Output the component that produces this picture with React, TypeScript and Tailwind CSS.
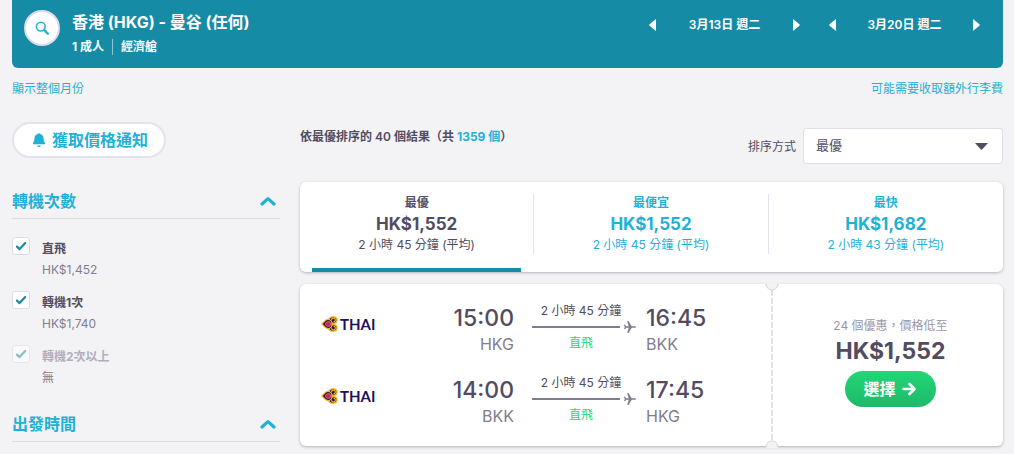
import { useState } from "react";
import { clsx } from "clsx";

const sortTabs = [
  { id: "best", label: "最優", price: "HK$1,552", duration: "2 小時 45 分鐘 (平均)" },
  { id: "cheapest", label: "最便宜", price: "HK$1,552", duration: "2 小時 45 分鐘 (平均)" },
  { id: "fastest", label: "最快", price: "HK$1,682", duration: "2 小時 43 分鐘 (平均)" },
];

const stopOptions = [
  { id: "direct", label: "直飛", price: "HK$1,452", disabled: false },
  { id: "one-stop", label: "轉機1次", price: "HK$1,740", disabled: false },
  { id: "two-stops", label: "轉機2次以上", price: "無", disabled: true },
];

const legs = [
  { depart: "15:00", from: "HKG", arrive: "16:45", to: "BKK", duration: "2 小時 45 分鐘" },
  { depart: "14:00", from: "BKK", arrive: "17:45", to: "HKG", duration: "2 小時 45 分鐘" },
];

function DateStepper({ date }: { date: string }) {
  return (
    <div className="flex w-[151px] items-center justify-between">
      <button type="button" aria-label="前一天">
        <svg width="7" height="12" viewBox="0 0 7 12" fill="currentColor">
          <path d="M7 0v12L.6 6.7a1 1 0 0 1 0-1.4z" />
        </svg>
      </button>
      <span className="text-xs font-semibold">{date}</span>
      <button type="button" aria-label="後一天">
        <svg width="7" height="12" viewBox="0 0 7 12" fill="currentColor">
          <path d="M0 0v12l6.4-5.3a1 1 0 0 0 0-1.4z" />
        </svg>
      </button>
    </div>
  );
}

function SearchHeader() {
  return (
    <header className="flex h-[68px] items-start justify-between rounded-b-md bg-[#158ba6] pr-[23px] pl-3 text-white">
      <div className="flex gap-3 pt-2.5">
        <button
          type="button"
          aria-label="搜尋"
          className="flex size-9 items-center justify-center rounded-full border-2 border-[#dddce6] bg-white text-[#1fb1d6]"
        >
          <svg width="16" height="16" viewBox="0 0 16 16" fill="none" stroke="currentColor">
            <circle cx="6.8" cy="6.6" r="4.4" strokeWidth="1.6" />
            <path d="M10.2 10l3.600 3.600" strokeWidth="2.400" strokeLinecap="round" />
          </svg>
        </button>
        <div>
          <h1 className="text-base leading-6 font-bold">香港 (HKG) - 曼谷 (任何)</h1>
          <p className="mt-1 flex items-center text-xs leading-[18px] font-bold">
            <span className="border-r border-white/50 pr-2 leading-4">1 成人</span>
            <span className="pl-2">經濟艙</span>
          </p>
        </div>
      </div>
      <div className="flex gap-[29px] pt-[17px]">
        <DateStepper date="3月13日 週二" />
        <DateStepper date="3月20日 週二" />
      </div>
    </header>
  );
}

function SectionHeading({ title }: { title: string }) {
  return (
    <h2 className="border-b border-[#dddce2]">
      <button type="button" className="flex h-9 w-full items-center justify-between pt-px pr-1 font-bold text-[#1fb1d6]">
        {title}
        <svg width="16" height="10" viewBox="0 0 16 10" fill="none" stroke="currentColor" strokeWidth="3.200">
          <path d="M2 8L8 2.600 14 8" strokeLinecap="round" strokeLinejoin="round" />
        </svg>
      </button>
    </h2>
  );
}

function StopFilter({ option }: { option: (typeof stopOptions)[number] }) {
  const [checked, setChecked] = useState(true);

  return (
    <label htmlFor={option.id} className="flex gap-3">
      <span className={clsx("relative size-[18px] shrink-0", option.disabled && "opacity-50")}>
        <input
          id={option.id}
          type="checkbox"
          checked={checked}
          disabled={option.disabled}
          onChange={() => setChecked(!checked)}
          className="block size-[18px] appearance-none rounded-[3px] border border-[#dddce6] bg-white"
        />
        {checked && (
          <svg
            className="pointer-events-none absolute inset-0"
            width="18"
            height="18"
            viewBox="0 0 18 18"
            fill="none"
            stroke="#158ba6"
            strokeWidth="2.200"
          >
            <path d="M5 9.600l2.600 2.500 5.600-6" strokeLinecap="round" strokeLinejoin="round" />
          </svg>
        )}
      </span>
      <span className="pt-px pb-px text-xs leading-[21px]">
        <span className={clsx("block font-bold", option.disabled && "text-[#b2aebd]")}>{option.label}</span>
        <span className="block text-[#817d90]">{option.price}</span>
      </span>
    </label>
  );
}

function Sidebar() {
  return (
    <aside className="w-[268px] shrink-0">
      <button
        type="button"
        className="flex h-9 items-center gap-1.5 rounded-full border-2 border-[#e4e2ec] bg-white pr-4 pl-[18px] font-bold text-[#1fb1d6]"
      >
        <svg width="14" height="16" viewBox="0 0 14 16" fill="currentColor">
          <path d="M7 1.200c.6 0 1 .4 1.100.9C10.300 2.600 11.500 4.300 11.600 6.600c.1 2.300.5 3.500 1.500 4.300V12.300H.9v-1.400c1-.8 1.400-2 1.500-4.300.1-2.300 1.300-4 3.500-4.500.1-.5.5-.9 1.100-.9z" />
          <path d="M5.200 13.500h3.600a1.800 1.500 0 0 1-3.600 0z" />
        </svg>
        獲取價格通知
      </button>
      <section className="mt-6">
        <SectionHeading title="轉機次數" />
        <div className="mt-[18px] flex flex-col gap-2.5">
          {stopOptions.map((option) => (
            <StopFilter key={option.id} option={option} />
          ))}
        </div>
      </section>
      <section className="mt-4">
        <SectionHeading title="出發時間" />
      </section>
    </aside>
  );
}

function ResultsBar() {
  return (
    <div className="flex items-start justify-between pt-1.5">
      <p className="text-xs leading-[18px] font-semibold">
        依最優排序的 40 個結果（共 <span className="font-bold text-[#1fb1d6]">1359 個</span>）
      </p>
      <div className="flex items-center gap-[7px]">
        <label htmlFor="sort" className="pt-0.5 text-xs">
          排序方式
        </label>
        <div className="relative">
          <select
            id="sort"
            className="h-9 w-[200px] appearance-none rounded-[3px] border border-[#e0dee8] bg-white px-3 text-[13px]"
          >
            <option>最優</option>
            <option>最便宜</option>
            <option>最快</option>
          </select>
          <svg
            className="pointer-events-none absolute top-[15px] right-[15px]"
            width="13"
            height="7"
            viewBox="0 0 13 7"
            fill="currentColor"
          >
            <path d="M0 0h13L7.300 6.300a1.100 1.100 0 0 1-1.600 0z" />
          </svg>
        </div>
      </div>
    </div>
  );
}

function SortTabs() {
  const [active, setActive] = useState("best");

  return (
    <div className="mt-[18px] grid grid-cols-3 rounded-md bg-white pt-3 pb-[18px] shadow-[0_1px_3px_rgba(37,32,51,0.3)]">
      {sortTabs.map((tab) => (
        <button
          key={tab.id}
          type="button"
          onClick={() => setActive(tab.id)}
          className={clsx(
            "relative border-r border-[#e4e2ea] text-center text-xs last:border-r-0",
            active !== tab.id && "text-[#1fb1d6]",
          )}
        >
          <span className="block leading-[18px] font-semibold">{tab.label}</span>
          <span className="block text-[17px] leading-6 font-bold">{tab.price}</span>
          <span className="block leading-[18px]">{tab.duration}</span>
          {active === tab.id && <span className="absolute inset-x-3 -bottom-[18px] h-1 bg-[#158ba6]" />}
        </button>
      ))}
    </div>
  );
}

function AirlineLogo() {
  return (
    <div className="flex flex-1 items-center gap-0.5 font-['Lato',sans-serif] text-[15px] leading-4 font-bold text-[#22105a]">
      <svg width="17" height="16" viewBox="0 0 17 16">
        <g fill="#22105a" stroke="#f5b81c" strokeWidth="1.300">
          <path d="M7.500 4.200C8 1.800 10 .7 12.300.8c2.300.1 3.700 1.500 3.700 3.400 0 2-1.500 3.200-3.400 3.100L9.500 7z" />
          <path d="M7.500 11.800c.5 2.400 2.500 3.500 4.800 3.400 2.300-.1 3.700-1.500 3.700-3.400 0-2-1.500-3.200-3.400-3.100L9.500 9z" />
          <path d="M.8 8C2.800 6.800 3.700 3.400 7 3.400c2.500 0 4.100 2.200 4.100 4.600S9.500 12.600 7 12.600C3.700 12.600 2.800 9.200.8 8z" />
        </g>
        <path d="M10.600 4.400a1.900 1.900 0 1 1 2 1.500M10.600 11.600a1.900 1.900 0 1 0 2-1.500" fill="none" stroke="#f5b81c" strokeWidth="1.100" />
        <path d="M4.200 8C5.200 6.400 6 5.600 7.400 5.600A2.400 2.400 0 0 1 7.400 10.400C6 10.400 5.200 9.600 4.200 8z" fill="#d3147f" stroke="#f5b81c" strokeWidth=".6" />
      </svg>
      THAI
    </div>
  );
}

function FlightLeg({ leg }: { leg: (typeof legs)[number] }) {
  return (
    <div className="flex h-[52px] items-start">
      <div className="flex h-10 flex-1 items-center">
        <AirlineLogo />
      </div>
      <div className="text-right">
        <p className="text-[23px] leading-7 font-medium">{leg.depart}</p>
        <p className="text-base leading-6 text-[#817d90]">{leg.from}</p>
      </div>
      <div className="ml-[18px] w-[104px] text-center text-xs leading-[14px]">
        <p className="pr-1.5">{leg.duration}</p>
        <div className="my-[3px] flex h-3 items-center gap-1 text-[#817d90]">
          <span className="h-0.5 flex-1 bg-[#817d90]" />
          <svg width="12" height="12" viewBox="0 0 12 12" fill="currentColor">
            <path d="M12 6c0 .5-.5.800-1.200.800H7.700L4.600 12H3.200l1.500-5.200H2.200L1.100 8.200H0L.7 6 0 3.800h1.100l1.100 1.400h2.500L3.200 0h1.400l3.100 5.200h3.100c.7 0 1.200.3 1.200.8z" />
          </svg>
        </div>
        <p className="pr-1.5 text-[#1fd572]">直飛</p>
      </div>
      <div className="ml-2.5 w-[105px]">
        <p className="text-[23px] leading-7 font-medium">{leg.arrive}</p>
        <p className="text-base leading-6 text-[#817d90]">{leg.to}</p>
      </div>
    </div>
  );
}

function Notch({ className }: { className: string }) {
  return (
    <svg className={clsx("absolute -left-[7px]", className)} width="14" height="8" viewBox="0 0 14 8">
      <path d="M1 0h12v1a6 6 0 0 1-12 0z" fill="#f3f2f5" />
      <path d="M1 1a6 6 0 0 0 12 0" fill="none" stroke="#d5d4da" />
    </svg>
  );
}

function Ticket() {
  return (
    <article className="mt-3 flex rounded-md bg-white shadow-[0_1px_3px_rgba(37,32,51,0.3)]">
      <div className="flex flex-1 flex-col gap-5 pt-5 pr-[21px] pb-[18px] pl-[21px]">
        {legs.map((leg) => (
          <FlightLeg key={leg.depart} leg={leg} />
        ))}
      </div>
      <div className="relative flex w-[231px] flex-col items-center pt-[33px] pl-1.5">
        <span className="absolute inset-y-1.5 -left-px w-0.5 bg-[repeating-linear-gradient(to_bottom,#e1dfe8_0_6px,transparent_6px_8px)]" />
        <Notch className="-top-px" />
        <Notch className="-bottom-0.5 rotate-180" />
        <p className="text-xs leading-[18px] text-[#9b97a8]">24 個優惠，價格低至</p>
        <p className="text-[23px] leading-8 font-bold">HK$1,552</p>
        <button
          type="button"
          className="mt-1 flex h-9 items-center gap-1.5 rounded-full bg-linear-to-b from-[#22d777] to-[#1fb96a] pr-5 pl-[18px] font-bold text-white"
        >
          選擇
          <svg width="14" height="14" viewBox="0 0 14 14" fill="none" stroke="currentColor" strokeWidth="2.600">
            <path d="M1.500 7H12M7.500 2l5 5-5 5" strokeLinecap="round" strokeLinejoin="round" />
          </svg>
        </button>
      </div>
    </article>
  );
}

export default function App() {
  return (
    <div className="min-h-screen bg-[#f3f2f5] pr-[11px] pl-3 font-['Inter','Noto_Sans_CJK_TC',sans-serif] text-base text-[#524c61]">
      <SearchHeader />
      <nav className="flex justify-between pt-3 text-xs leading-[18px] text-[#1fb1d6]">
        <a href="#month">顯示整個月份</a>
        <a href="#baggage">可能需要收取額外行李費</a>
      </nav>
      <div className="mt-6 flex gap-5">
        <Sidebar />
        <main className="flex-1">
          <ResultsBar />
          <SortTabs />
          <Ticket />
        </main>
      </div>
    </div>
  );
}
